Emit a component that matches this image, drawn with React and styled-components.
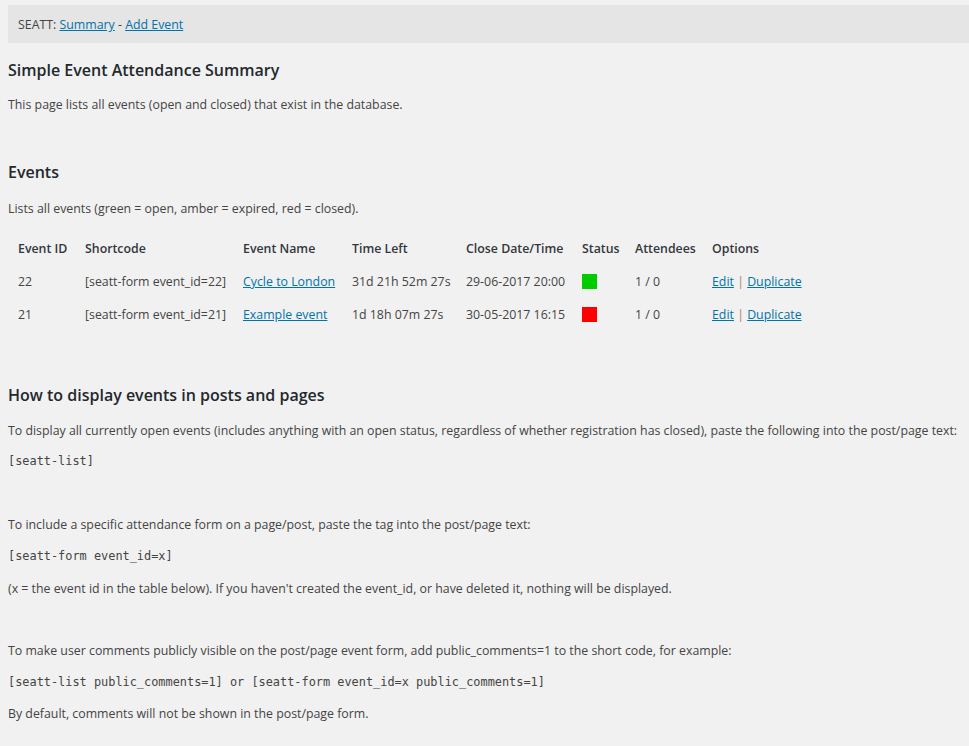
import React from 'react';
import styled, { createGlobalStyle } from 'styled-components';

const GlobalStyle = createGlobalStyle`
  html, body {
    margin: 0;
    padding: 0;
    background: #f1f1f1;
  }
  body {
    color: #444;
    font-family: "Open Sans", "Noto Sans", sans-serif;
    font-size: 12.35px;
    line-height: 1.4;
  }
`;

const Wrap = styled.div`
  padding: 5px 0 20px 8px;
`;

const TopBar = styled.div`
  background: #e5e5e5;
  height: 38px;
  box-sizing: border-box;
  padding: 2px 0 0 10px;
  display: flex;
  align-items: center;
`;

const Link = styled.a`
  color: #0073aa;
  text-decoration: underline;
  cursor: pointer;
`;

const Title = styled.h2`
  margin: ${p => p.$top || 18}px 0 0;
  font-size: 16px;
  font-weight: 600;
  color: #23282d;
  line-height: 26px;
`;

const Para = styled.p`
  margin: ${p => p.$top || 0}px 0 0;
  line-height: 20px;
`;

const Code = styled.code`
  display: block;
  margin-top: ${p => p.$top || 10}px;
  font-family: "DejaVu Sans Mono", "Liberation Mono", monospace;
  font-size: 11.9px;
  line-height: 20px;
  color: #444;
`;

const Table = styled.table`
  margin-top: 13px;
  border-collapse: collapse;
  table-layout: fixed;
  width: 804px;
`;

const Th = styled.th`
  text-align: left;
  font-weight: 600;
  padding: 0 10px;
  height: 33px;
  color: #32373c;
  white-space: nowrap;
  width: ${p => p.$w}px;
`;

const Td = styled.td`
  padding: 0 10px;
  height: 33px;
  white-space: nowrap;
`;

const StatusBox = styled.span`
  display: block;
  width: 15px;
  height: 15px;
  background: ${p => p.$color};
`;

const Sep = styled.span`
  color: #a8835a;
`;

const events = [
  { id: 22, name: 'Cycle to London', left: '31d 21h 52m 27s', close: '29-06-2017 20:00', color: '#00cc00' },
  { id: 21, name: 'Example event', left: '1d 18h 07m 27s', close: '30-05-2017 16:15', color: '#ff0000' },
];

export default function App() {
  return (
    <Wrap>
      <GlobalStyle />
      <TopBar>
        SEATT:&nbsp;<Link>Summary</Link>&nbsp;-&nbsp;<Link>Add Event</Link>
      </TopBar>

      <Title $top={14}>Simple Event Attendance Summary</Title>
      <Para $top={12}>This page lists all events (open and closed) that exist in the database.</Para>

      <Title $top={44}>Events</Title>
      <Para $top={14}>Lists all events (green = open, amber = expired, red = closed).</Para>

      <Table>
        <thead>
          <tr>
            <Th $w={47}>Event ID</Th>
            <Th $w={138}>Shortcode</Th>
            <Th $w={89}>Event Name</Th>
            <Th $w={94}>Time Left</Th>
            <Th $w={96}>Close Date/Time</Th>
            <Th $w={33}>Status</Th>
            <Th $w={57}>Attendees</Th>
            <Th $w={90}>Options</Th>
          </tr>
        </thead>
        <tbody>
          {events.map(ev => (
            <tr key={ev.id}>
              <Td>{ev.id}</Td>
              <Td>[seatt-form event_id={ev.id}]</Td>
              <Td><Link>{ev.name}</Link></Td>
              <Td>{ev.left}</Td>
              <Td>{ev.close}</Td>
              <Td><StatusBox $color={ev.color} /></Td>
              <Td>1 / 0</Td>
              <Td><Link>Edit</Link> <Sep>|</Sep> <Link>Duplicate</Link></Td>
            </tr>
          ))}
        </tbody>
      </Table>

      <Title $top={51}>How to display events in posts and pages</Title>
      <Para $top={13}>
        To display all currently open events (includes anything with an open status, regardless of whether registration has closed), paste the following into the post/page text:
      </Para>
      <Code>[seatt-list]</Code>

      <Para $top={44}>To include a specific attendance form on a page/post, paste the tag into the post/page text:</Para>
      <Code $top={11}>[seatt-form event_id=x]</Code>
      <Para $top={13}>(x = the event id in the table below). If you haven't created the event_id, or have deleted it, nothing will be displayed.</Para>

      <Para $top={42}>To make user comments publicly visible on the post/page event form, add public_comments=1 to the short code, for example:</Para>
      <Code $top={11}>[seatt-list public_comments=1] or [seatt-form event_id=x public_comments=1]</Code>
      <Para $top={12}>By default, comments will not be shown in the post/page form.</Para>
    </Wrap>
  );
}
